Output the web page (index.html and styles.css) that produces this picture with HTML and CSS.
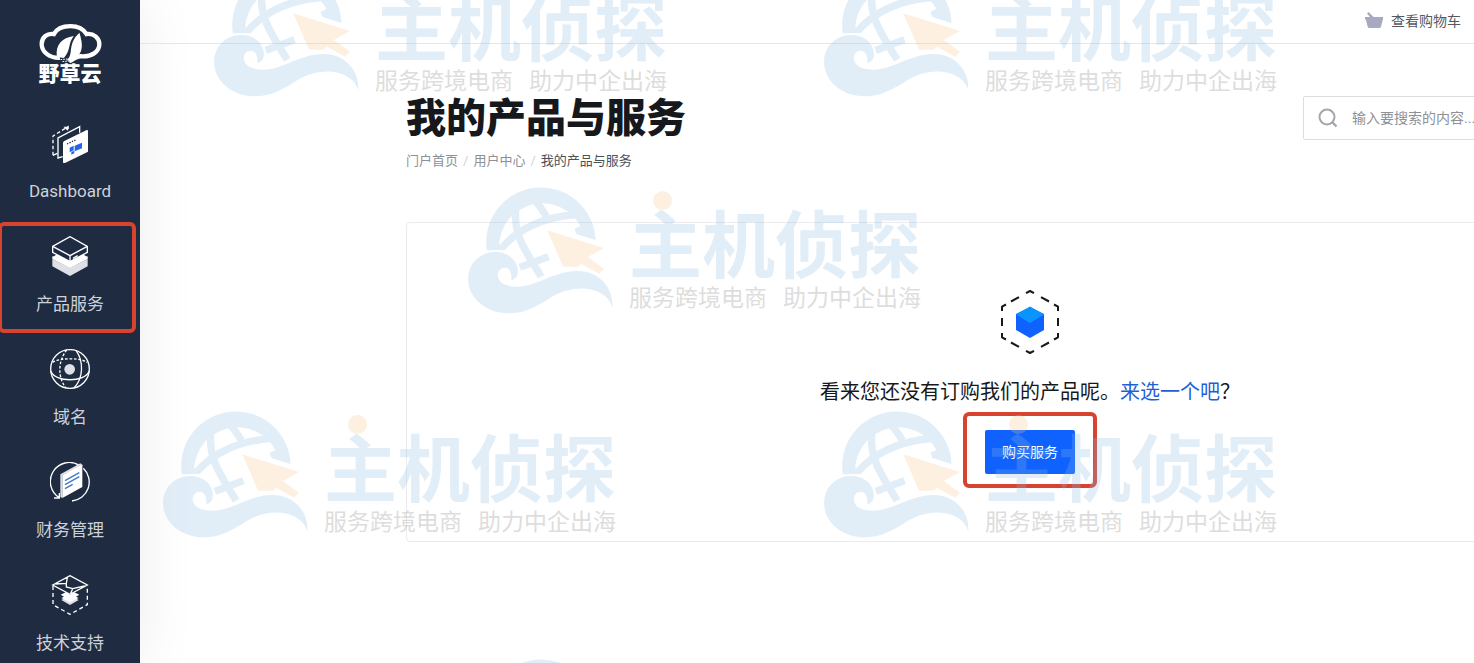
FILE: index.html
```html
<!DOCTYPE html>
<html lang="zh-CN">
<head>
<meta charset="utf-8">
<title>我的产品与服务</title>
<meta name="viewport" content="width=device-width, initial-scale=1">
<link rel="stylesheet" href="styles.css">
</head>
<body>
<svg class="defs" aria-hidden="true">
  <symbol id="wave-globe" viewBox="20 20 440 384">
    <path fill="#8bbbe3" d="M79 213A164 164 0 1 1 405 182L348 164L342 148L360 140A130 130 0 0 0 116 193L135 212Z"/>
    <g fill="none" stroke="#8bbbe3" stroke-width="22">
      <path d="M124 206C170 150 250 112 345 106"/>
      <path d="M168 72C152 160 195 215 242 292"/>
      <path d="M218 60C232 72 246 92 258 112"/>
      <path d="M178 264L264 232"/>
    </g>
    <path fill="#8bbbe3" d="M455 384C440 325 345 308 272 354C225 385 190 402 145 402C75 402 23 355 23 300C23 250 60 218 105 218C145 218 172 245 172 275C172 290 165 300 152 303C155 285 150 265 132 265C118 265 112 278 112 288C112 310 135 322 170 322C230 322 280 275 350 275C420 275 460 330 455 384Z"/>
    <path fill="#f8c58c" d="M260 153L430 206L382 233L430 268L416 283L362 253L350 262H308Z"/>
  </symbol>
</svg>

<div class="app">
  <aside class="sidebar">
    <a class="logo" href="#">
      <svg class="logo-mark" viewBox="115 68 190 120" aria-hidden="true">
        <path fill="none" stroke="#fff" stroke-width="13" d="M178 173C145 174 123 154 123 131C123 111 140 97 160 101C168 85 188 77 210 77C234 77 250 87 258 101C280 98 297 112 297 132C297 154 274 171 240 168C226 168 220 178 206 183"/>
        <path fill="#fff" d="M169 170C164 134 184 112 220 107C202 128 212 150 190 173Z"/>
        <path fill="#fff" d="M237 97C246 128 252 156 222 176C214 181 206 182 198 180C222 164 198 132 237 97Z"/>
        <path fill="none" stroke="#fff" stroke-width="3" stroke-dasharray="5 3" d="M180 178L214 175M186 184L210 182"/>
      </svg>
      <span class="logo-text">野草云</span>
    </a>
    <nav class="nav">
      <a class="nav-item" href="#">
        <svg class="nav-icon" viewBox="150 369 120 120" aria-hidden="true">
          <path class="line" stroke-dasharray="11 7" d="M159 466V408L204 380V392"/>
          <path class="solid" d="M190 380h16l-3 12z"/>
          <path class="line" d="M188 470L174 474V414L239 380V398"/>
          <path class="line" d="M159 466L172 460"/>
          <path class="solid" d="M189 429Q189 425 193 423L260 390Q264 389 264 393V455L193 490Q189 490 189 486Z"/>
          <path fill="none" stroke="#1e2b42" stroke-width="4" stroke-dasharray="4 4" d="M201 432L227 420"/>
          <path class="blue" d="M209 443l12-6v14l-12 6zM224 437l22-9v17l-22 9zM214 456l9-4v8l-9 4z"/>
        </svg>
        <span>Dashboard</span>
      </a>
      <a class="nav-item marked" href="#">
        <svg class="nav-icon" viewBox="150 63 120 120" aria-hidden="true">
          <path fill="#fff" d="M157 124L210 151L263 124V132L210 160L157 132Z"/>
          <path fill="#fff" d="M157 126L172 118L210 138L248 118L263 126L210 154Z"/>
          <path fill="#dfdfe6" d="M157 132L210 158L263 132V154L210 183L157 154Z"/>
          <path class="line" fill="#1e2b42" d="M158 94L210 65L262 94V112L210 140L158 112Z"/>
          <path class="line" d="M158 94L210 122L262 94M210 122V140M219 130L233 122"/>
        </svg>
        <span>产品服务</span>
      </a>
      <a class="nav-item" href="#">
        <svg class="nav-icon" viewBox="150 402 120 120" aria-hidden="true">
          <circle class="line" cx="210" cy="462" r="58"/>
          <path class="line" d="M152 468C165 503 255 503 268 468M228 406C252 440 250 490 222 519"/>
          <path class="line" stroke-dasharray="8 5" d="M158 442C178 428 242 428 262 442M200 405C172 440 174 490 198 519"/>
          <circle fill="#dfdfe6" cx="209" cy="463" r="16"/>
        </svg>
        <span>域名</span>
      </a>
      <a class="nav-item" href="#">
        <svg class="nav-icon" viewBox="150 66 120 120" aria-hidden="true">
          <path class="line" d="M238 76A57 57 0 0 0 178 173M250 85A57 57 0 0 1 216 183M162 174H178V159"/>
          <path fill="#dfdfe6" d="M181 103L241 70L247 74V80L187 106V174L181 171Z"/>
          <path class="solid" d="M187 106L247 74V141L187 174Z"/>
          <path fill="none" stroke="#3f78c9" stroke-width="4" d="M195 122L238 98M195 134L238 110M195 146L218 133"/>
        </svg>
        <span>财务管理</span>
      </a>
      <a class="nav-item" href="#">
        <svg class="nav-icon" viewBox="150 405 120 120" aria-hidden="true">
          <path class="line" d="M158 435L210 407L262 435L210 463ZM166 432L199 430L202 412M199 430L199 441L218 446L254 438M218 446L212 460"/>
          <path class="line" stroke-dasharray="12 9" d="M159 438V494L210 523L262 494V438"/>
          <path fill="#dfdfe6" d="M184 480L210 466L236 480L210 495Z"/>
          <path class="solid" d="M182 464L197 457L210 464L223 457L238 464L228 470L236 474L210 487L184 474L192 470Z"/>
        </svg>
        <span>技术支持</span>
      </a>
    </nav>
  </aside>

  <main class="main">
    <header class="topbar">
      <a class="cart" href="#">
        <svg class="cart-icon" viewBox="0 0 18 16" aria-hidden="true">
          <path fill="#a7a9c0" d="M0 5H5L2 1.500L3.600 0L8.500 5H18V7L16 14.500Q15.700 16 14 16H4.500Q3 16 2.600 14.500L1 8L0 7Z"/>
        </svg>
        <span>查看购物车</span>
      </a>
    </header>

    <div class="content">
      <div class="page-head">
        <div>
          <h1 class="title">我的产品与服务</h1>
          <nav class="breadcrumb" aria-label="breadcrumb">
            <a href="#">门户首页</a><span class="sep">/</span><a href="#">用户中心</a><span class="sep">/</span><span class="current">我的产品与服务</span>
          </nav>
        </div>
        <label class="search">
          <svg class="search-icon" viewBox="0 0 20 20" aria-hidden="true">
            <circle cx="9" cy="9" r="7.500" fill="none" stroke="#a3a7ac" stroke-width="2"/>
            <path d="M14 14L18.500 18.500" stroke="#a3a7ac" stroke-width="2.400"/>
          </svg>
          <input type="search" placeholder="输入要搜索的内容..." aria-label="搜索">
        </label>
      </div>

      <section class="card">
        <svg class="empty-icon" viewBox="0 0 58 64" aria-hidden="true">
          <path fill="none" stroke="#16181c" stroke-width="2" stroke-linejoin="round" d="M25 3.200L29 1L33 3.200M40 7.100L48 11.500M53 14.500L57 16.700V21M57 28V36M57 43V47.300L53 49.500M48 52.500L40 56.900M33 60.800L29 63L25 60.800M18 56.900L10 52.500M5 49.500L1 47.300V43M1 36V28M1 21V16.700L5 14.500M10 11.500L18 7.100"/>
          <path fill="#0f62fe" d="M15 24L29 17L43 24V40L29 48L15 40Z"/>
          <path fill="#0a94ff" d="M15 24.500L29 16.500L43 24.500L29 33Z"/>
        </svg>
        <p class="empty-text">看来您还没有订购我们的产品呢。<a href="#">来选一个吧</a>？</p>
        <div class="action"><button class="buy" type="button">购买服务</button></div>
      </section>
    </div>
  </main>

  <div class="watermarks" aria-hidden="true">
    <div class="wm wm-a"><svg><use href="#wave-globe"/></svg><div class="wm-words"><b>主机侦探</b><p><span>服务跨境电商</span><span>助力中企出海</span></p></div></div>
    <div class="wm wm-b"><svg><use href="#wave-globe"/></svg><div class="wm-words"><b>主机侦探</b><p><span>服务跨境电商</span><span>助力中企出海</span></p></div></div>
    <div class="wm wm-c"><svg><use href="#wave-globe"/></svg><div class="wm-words"><b>主机侦探</b><p><span>服务跨境电商</span><span>助力中企出海</span></p></div></div>
    <div class="wm wm-d"><svg><use href="#wave-globe"/></svg><div class="wm-words"><b>主机侦探</b><p><span>服务跨境电商</span><span>助力中企出海</span></p></div></div>
    <div class="wm wm-e"><svg><use href="#wave-globe"/></svg><div class="wm-words"><b>主机侦探</b><p><span>服务跨境电商</span><span>助力中企出海</span></p></div></div>
    <div class="wm wm-f"><svg><use href="#wave-globe"/></svg></div>
  </div>
</div>
</body>
</html>
```
FILE: styles.css
```css
* { box-sizing: border-box; }

body {
  margin: 0;
  font-family: Roboto, "Noto Sans CJK SC", sans-serif;
  font-size: 14px;
  color: #16181c;
  background: #fff;
}

a { color: inherit; text-decoration: none; }

.defs { position: absolute; width: 0; height: 0; }

.app {
  position: relative;
  display: flex;
  height: 100vh;
  overflow: hidden;
}

/* Sidebar */
.sidebar {
  flex: none;
  width: 140px;
  background: #1e2b40;
  box-shadow: 0 0 60px rgba(0, 0, 0, .08);
}

.logo {
  display: flex;
  flex-direction: column;
  align-items: center;
  height: 105px;
  padding-top: 23px;
}
.logo-mark { width: 63px; height: 40px; }
.logo-text {
  font-size: 21px;
  font-weight: 900;
  line-height: 22px;
  color: #fff;
}

.nav-item {
  position: relative;
  display: flex;
  flex-direction: column;
  align-items: center;
  gap: 18px;
  padding: 18px 0 17px;
  font-size: 17px;
  line-height: 20px;
  color: #cdd2da;
}
.nav-icon { width: 40px; height: 40px; }
.nav-icon .line { stroke: #fff; stroke-width: 4; }
.nav-icon .line:not([fill]) { fill: none; }
.nav-icon .solid { fill: #fff; }
.nav-icon .blue { fill: #2465e8; }

.marked::after,
.action::after {
  content: "";
  position: absolute;
  border: 4px solid #d8432f;
  border-radius: 6px;
}
.marked::after { inset: 4px 4px -2px -2px; }

/* Main column */
.main { flex: 1; min-width: 0; }

.topbar {
  display: flex;
  align-items: center;
  justify-content: flex-end;
  height: 44px;
  padding: 0 13px 4px 0;
  border-bottom: 1px solid #e6e6e8;
}
.cart {
  display: flex;
  align-items: center;
  gap: 8px;
  color: #55585f;
}
.cart-icon { width: 18px; height: 16px; }

.content {
  min-width: 1514px;
  padding: 52px 0 0 266px;
}
.page-head {
  display: flex;
  align-items: flex-start;
  justify-content: space-between;
}
.title {
  margin: 0;
  font-size: 40px;
  font-weight: 900;
  line-height: 46px;
}
.breadcrumb {
  margin-top: 8px;
  font-size: 13px;
  line-height: 22px;
  color: #8d9197;
}
.breadcrumb .sep { padding: 0 5px; color: #cfd2d6; }
.breadcrumb .current { color: #4c5057; }

.search {
  display: flex;
  align-items: center;
  gap: 14px;
  width: 351px;
  height: 44px;
  padding: 0 14px;
  border: 1px solid #dcdde0;
  border-radius: 2px;
}
.search-icon { flex: none; width: 20px; height: 20px; }
.search input {
  flex: 1;
  min-width: 0;
  padding: 0;
  border: 0;
  outline: 0;
  background: none;
  font: inherit;
}
.search input::placeholder { color: #8d9197; opacity: 1; }

.card {
  display: flex;
  flex-direction: column;
  align-items: center;
  margin-top: 50px;
  padding: 67px 0;
  border: 1px solid #ebebed;
  border-radius: 4px;
}
.empty-icon { width: 58px; height: 64px; }
.empty-text {
  margin: 24px 0;
  font-size: 20px;
  line-height: 28px;
}
.empty-text a { color: #1f5fd6; }

.action { position: relative; }
.action::after { inset: -18px -22px -14px; }
.buy {
  display: block;
  height: 44px;
  padding: 0 17px 2px;
  border: 0;
  border-radius: 2px;
  background: #0f62fe;
  color: #fff;
  font: inherit;
}

/* Repeating watermark laid over the page */
.watermarks {
  position: absolute;
  inset: 0;
  overflow: hidden;
  opacity: .25;
  pointer-events: none;
}
.wm {
  position: absolute;
  display: flex;
  gap: 15px;
  font-family: "Noto Sans CJK SC", sans-serif;
  white-space: nowrap;
}
.wm svg { flex: none; width: 147px; height: 128px; }
.wm-words { position: relative; padding-top: 14px; }
.wm-words b {
  display: block;
  font-size: 73px;
  font-weight: 700;
  line-height: 80px;
  color: #8bbbe3;
}
.wm-words p {
  display: flex;
  justify-content: space-between;
  margin: 2px 0 0;
  font-size: 23px;
  line-height: 28px;
  color: #7b7b7b;
}
.wm-words::before {
  content: "";
  position: absolute;
  left: 24px;
  top: 5px;
  width: 19px;
  height: 19px;
  border-radius: 50%;
  background: #f8c58c;
}
.wm-a { left: 213px; top: -31px; }
.wm-b { left: 823px; top: -31px; }
.wm-c { left: 467px; top: 186px; }
.wm-d { left: 162px; top: 410px; }
.wm-e { left: 823px; top: 410px; }
.wm-f { left: 467px; top: 658px; }
```
